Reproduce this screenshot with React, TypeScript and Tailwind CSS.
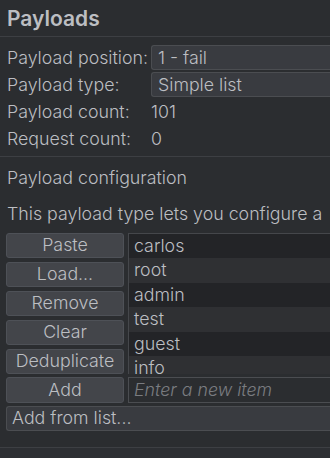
const items = ["carlos", "root", "admin", "test", "guest", "info"];
const buttons = ["Paste", "Load...", "Remove", "Clear", "Deduplicate"];

function Row({ label, children }: { label: string; children: React.ReactNode }) {
  return (
    <div className="flex items-center h-[27px]">
      <span className="w-[151px] shrink-0 pl-[7px] whitespace-nowrap">{label}</span>
      {children}
    </div>
  );
}

export default function App() {
  return (
    <div
      className="w-[330px] h-[458px] overflow-hidden bg-[#2b2d30] text-[#bcbec2] text-[17.8px] leading-none font-[350]"
      style={{ fontFamily: "Inter, 'Noto Sans', sans-serif" }}
    >
      {/* header */}
      <div className="h-[37px] flex items-center pl-[7px] border-b border-[#3d3f43]">
        <h1 className="text-[21px] font-semibold">Payloads</h1>
      </div>

      {/* settings */}
      <div className="pt-[7px] pb-[4px] border-b border-[#3d3f43]">
        <Row label="Payload position:">
          <div className="flex-1 h-[25px] flex items-center pl-[6px] bg-[#393b40] border border-[#4b4d51] rounded-l-[3px] border-r-0">
            1 - fail
          </div>
        </Row>
        <Row label="Payload type:">
          <div className="flex-1 h-[25px] flex items-center pl-[6px] bg-[#393b40] border border-[#4b4d51] rounded-l-[3px] border-r-0">
            Simple list
          </div>
        </Row>
        <Row label="Payload count:">
          <span>101</span>
        </Row>
        <Row label="Request count:">
          <span>0</span>
        </Row>
      </div>

      {/* config */}
      <div className="pl-[7px] pt-[12px]">Payload configuration</div>
      <div className="pl-[7px] pt-[18px] whitespace-nowrap">This payload type lets you configure a</div>

      <div className="flex gap-[4px] pl-[6px] pt-[10px]">
        <div className="flex flex-col gap-[4px] w-[118px] shrink-0">
          {buttons.map((b) => (
            <div
              key={b}
              className="h-[25px] flex items-center justify-center bg-[#43454a] border border-[#4e5157] rounded-[3px]"
            >
              {b}
            </div>
          ))}
        </div>
        <div className="flex-1 h-[141px] overflow-hidden border-t border-l border-[#45474b]">
          {items.map((it, i) => (
            <div
              key={it}
              className={`h-[24.5px] flex items-center pl-[5px] ${i % 2 === 0 ? "bg-[#232427]" : "bg-[#2f3033]"}`}
            >
              {it}
            </div>
          ))}
        </div>
      </div>

      <div className="flex gap-[4px] pl-[6px] pt-[3px]">
        <div className="w-[118px] h-[26px] shrink-0 flex items-center justify-center bg-[#43454a] border border-[#4e5157] rounded-[3px]">
          Add
        </div>
        <div className="flex-1 h-[26px] flex items-center pl-[5px] border border-r-0 border-[#4b4d51] italic text-[#7a7c80] whitespace-nowrap overflow-hidden">
          Enter a new item
        </div>
      </div>

      <div className="pl-[6px] pt-[3px]">
        <div className="h-[25px] flex items-center pl-[5px] bg-[#393b40] border border-r-0 border-[#4b4d51] rounded-l-[3px]">
          Add from list...
        </div>
      </div>

      <div className="mt-[16px] border-t border-[#3d3f43] h-[20px] bg-[#2d2f33]" />
    </div>
  );
}
